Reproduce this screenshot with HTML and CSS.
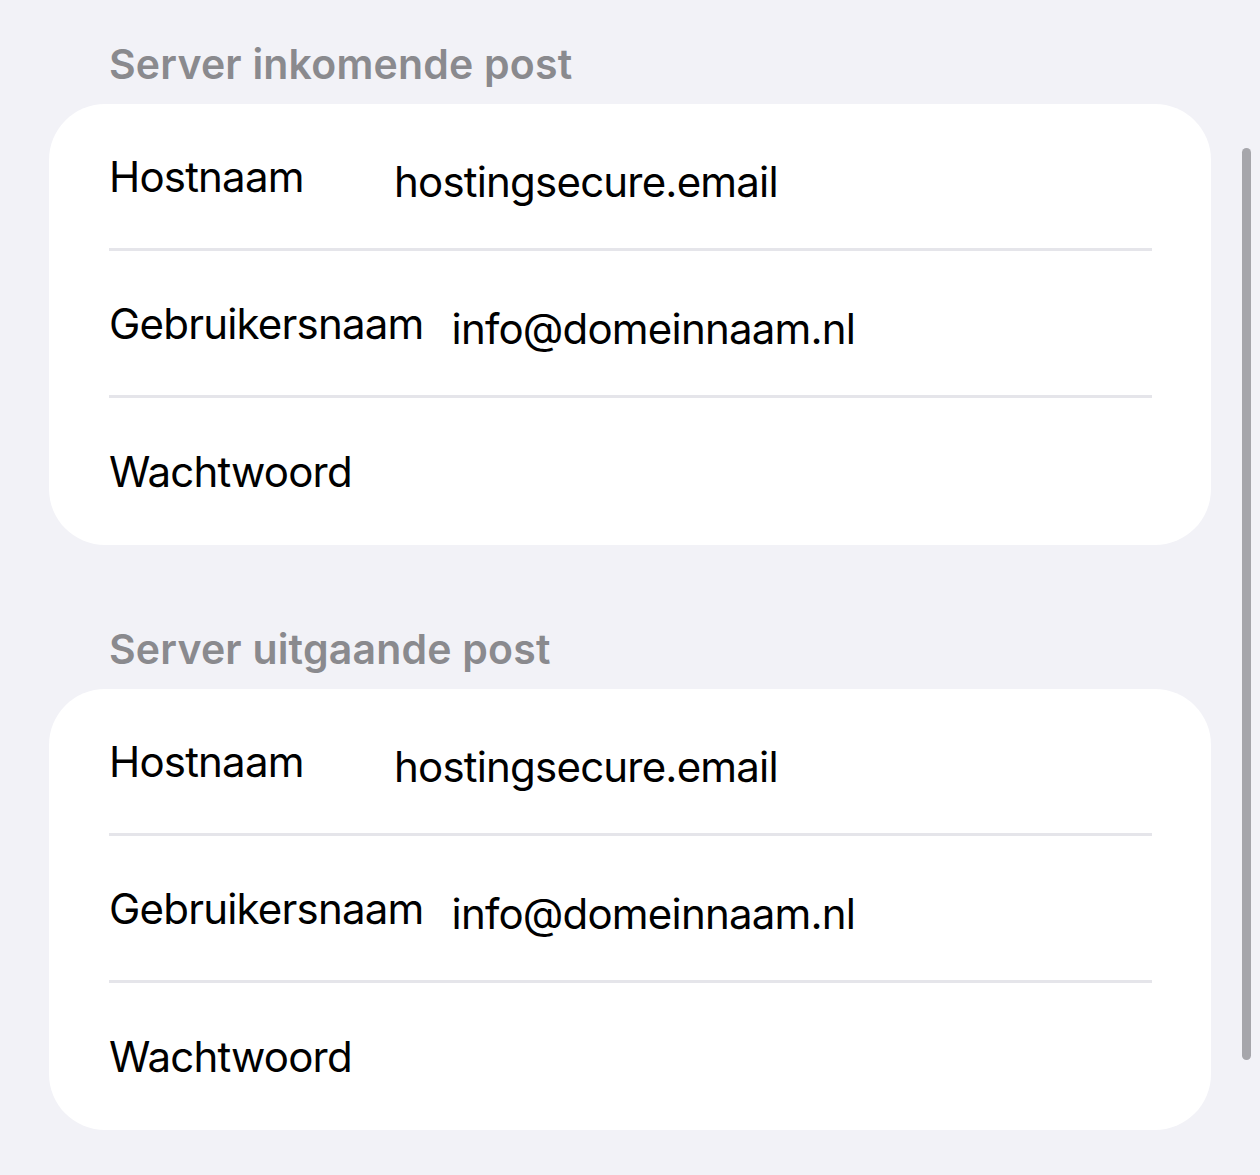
FILE: index.html
```html
<!DOCTYPE html>
<html lang="nl">
<head>
<meta charset="utf-8">
<title>Serverinstellingen</title>
<link rel="stylesheet" href="styles.css">
</head>
<body>
<main class="page">
  <section class="group">
    <h2 class="group-title">Server inkomende post</h2>
    <div class="card">
      <div class="row">
        <span class="label">Hostnaam</span>
        <span class="value">hostingsecure.email</span>
      </div>
      <div class="row">
        <span class="label">Gebruikersnaam</span>
        <span class="value">info@domeinnaam.nl</span>
      </div>
      <div class="row">
        <span class="label">Wachtwoord</span>
        <span class="value"></span>
      </div>
    </div>
  </section>
  <section class="group">
    <h2 class="group-title">Server uitgaande post</h2>
    <div class="card">
      <div class="row">
        <span class="label">Hostnaam</span>
        <span class="value">hostingsecure.email</span>
      </div>
      <div class="row">
        <span class="label">Gebruikersnaam</span>
        <span class="value">info@domeinnaam.nl</span>
      </div>
      <div class="row">
        <span class="label">Wachtwoord</span>
        <span class="value"></span>
      </div>
    </div>
  </section>
</main>
<div class="scrollbar"></div>
</body>
</html>
```
FILE: styles.css
```css
html, body {
  margin: 0;
  padding: 0;
}
body {
  background: #f2f2f7;
  font-family: Inter, "Noto Sans", "Liberation Sans", sans-serif;
  color: #000;
  height: 1175px;
  overflow: hidden;
}
.page {
  padding: 0 49px;
  display: flex;
  flex-direction: column;
  gap: 40px;
}
.group-title {
  margin: 0;
  height: 104px;
  box-sizing: border-box;
  padding: 39px 0 0 60px;
  font-size: 41px;
  line-height: 50px;
  font-weight: 600;
  color: #8a8a8e;
  letter-spacing: 0.2px;
}
.card {
  background: #fff;
  border-radius: 56px;
  display: flex;
  flex-direction: column;
}
.row {
  margin: 0 59px 0 60px;
  height: 144px;
  box-sizing: border-box;
  display: flex;
  align-items: flex-start;
  padding-top: 48px;
}
.row + .row {
  border-top: 3px solid #e5e5ea;
  height: 147px;
  padding-top: 48px;
}
.row:last-child {
  height: 150px;
  padding-top: 49px;
}
.label {
  min-width: 257px;
  font-size: 42px;
  line-height: 50px;
  letter-spacing: -0.8px;
  margin-right: 28px;
}
.value {
  font-size: 42px;
  line-height: 50px;
  letter-spacing: -0.8px;
  margin-top: 5px;
}
.scrollbar {
  position: absolute;
  left: 1242px;
  top: 148px;
  width: 9px;
  height: 912px;
  border-radius: 5px;
  background: #a6a6ab;
}
```
